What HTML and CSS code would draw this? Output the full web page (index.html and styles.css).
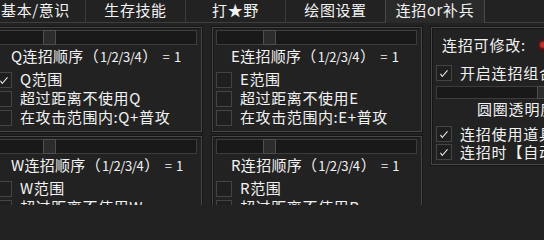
FILE: index.html
```html
<!DOCTYPE html>
<html lang="zh-CN">
<head>
<meta charset="utf-8">
<title>连招or补兵</title>
<link rel="stylesheet" href="styles.css">
</head>
<body>
<div class="app">
  <nav class="tabs">
    <div class="tab">基本/意识</div>
    <div class="tab">生存技能</div>
    <div class="tab">打★野</div>
    <div class="tab">绘图设置</div>
    <div class="tab active">连招or补兵</div>
    <div class="tab"></div>
  </nav>
  <main class="content">
    <div class="grid">
      <section class="panel">
        <div class="slider"><span class="thumb"></span></div>
        <div class="title">Q连招顺序（<span class="num">1/2/3/4</span>）<span class="num eq">= 1</span></div>
        <div class="rows">
          <label class="row"><span class="box checked"><svg viewBox="0 0 16 16"><polyline points="4,9 6,12 12,5"/></svg></span><span class="txt">Q范围</span></label>
          <label class="row"><span class="box"></span><span class="txt">超过距离不使用Q</span></label>
          <label class="row"><span class="box"></span><span class="txt">在攻击范围内:Q+普攻</span></label>
        </div>
      </section>
      <section class="panel">
        <div class="slider"><span class="thumb"></span></div>
        <div class="title">E连招顺序（<span class="num">1/2/3/4</span>）<span class="num eq">= 1</span></div>
        <div class="rows">
          <label class="row"><span class="box"></span><span class="txt">E范围</span></label>
          <label class="row"><span class="box"></span><span class="txt">超过距离不使用E</span></label>
          <label class="row"><span class="box"></span><span class="txt">在攻击范围内:E+普攻</span></label>
        </div>
      </section>
      <section class="panel">
        <div class="slider"><span class="thumb"></span></div>
        <div class="title">W连招顺序（<span class="num">1/2/3/4</span>）<span class="num eq">= 1</span></div>
        <div class="rows">
          <label class="row"><span class="box"></span><span class="txt">W范围</span></label>
          <label class="row"><span class="box"></span><span class="txt">超过距离不使用W</span></label>
          <label class="row"><span class="box"></span><span class="txt">在攻击范围内:W+普攻</span></label>
        </div>
      </section>
      <section class="panel">
        <div class="slider"><span class="thumb"></span></div>
        <div class="title">R连招顺序（<span class="num">1/2/3/4</span>）<span class="num eq">= 1</span></div>
        <div class="rows">
          <label class="row"><span class="box"></span><span class="txt">R范围</span></label>
          <label class="row"><span class="box"></span><span class="txt">超过距离不使用R</span></label>
          <label class="row"><span class="box"></span><span class="txt">在攻击范围内:R+普攻</span></label>
        </div>
      </section>
    </div>
    <section class="side">
      <div class="side-head">连招可修改:<span class="lamp"></span></div>
      <label class="srow first"><span class="box checked"><svg viewBox="0 0 16 16"><polyline points="4,9 6,12 12,5"/></svg></span><span class="txt">开启连招组合</span></label>
      <div class="bar"><span class="bar-end"></span></div>
      <div class="caption">圆圈透明度</div>
      <label class="srow gap"><span class="box checked"><svg viewBox="0 0 16 16"><polyline points="4,9 6,12 12,5"/></svg></span><span class="txt">连招使用道具</span></label>
      <label class="srow"><span class="box checked"><svg viewBox="0 0 16 16"><polyline points="4,9 6,12 12,5"/></svg></span><span class="txt">连招时【自动】</span></label>
    </section>
  </main>
</div>
</body>
</html>
```

FILE: styles.css
```css
html, body {
  margin: 0;
  padding: 0;
  background: #222222;
  overflow: hidden;
}
body {
  width: 544px;
  height: 205px;
  font-family: "Noto Sans CJK SC", "Noto Sans", sans-serif;
  font-size: 15px;
  color: #f2f2f2;
}
.app {
  margin-left: -14px;
  width: 620px;
}
.tabs {
  display: flex;
  height: 22px;
  border-bottom: 1px solid #3e3e3e;
}
.tab {
  flex: 0 0 100px;
  box-sizing: border-box;
  border-right: 1px solid #3a3a3a;
  text-align: center;
  line-height: 19px;
  letter-spacing: 0.6px;
  white-space: nowrap;
}
.tab.active {
  background: #2a2a2a;
  border-left: 1px solid #4a4a4a;
  border-right: 1px solid #4a4a4a;
  margin-left: -1px;
  margin-bottom: -1px;
  height: 23px;
}
.content {
  display: flex;
  align-items: flex-start;
  padding: 4px 0 0 6px;
  gap: 9px;
}
.grid {
  display: grid;
  grid-template-columns: 210px 210px;
  column-gap: 10px;
  row-gap: 4px;
}
.panel {
  box-sizing: border-box;
  height: 105px;
  border: 1px solid #474747;
  box-shadow: 0 0 0 1px #161616, inset 1px 1px 0 #161616;
  padding: 2px 4px 2px 3px;
}
.slider {
  height: 15px;
  box-sizing: border-box;
  border: 1px solid #3c3c3c;
  background: #191919;
  position: relative;
}
.thumb {
  position: absolute;
  left: 46px;
  top: -1px;
  width: 13px;
  height: 15px;
  box-sizing: border-box;
  border: 1px solid #4e4e4e;
  background: #2c2c2c;
}
.title {
  height: 21px;
  line-height: 21px;
  padding-left: 15px;
  white-space: nowrap;
  letter-spacing: 0.3px;
}
.num {
  font-size: 13px;
  letter-spacing: -0.4px;
  padding: 0 1px;
}
.num.eq {
  padding-left: 5px;
  word-spacing: 2px;
}
.rows {
  margin-top: 6px;
  display: flex;
  flex-direction: column;
}
.row {
  display: flex;
  align-items: flex-start;
  height: 19px;
  white-space: nowrap;
  letter-spacing: 0.6px;
}
.txt {
  line-height: 13px;
  display: block;
}
.row .box {
  margin-right: 8px;
}
.box {
  flex: 0 0 16px;
  width: 16px;
  height: 16px;
  box-sizing: border-box;
  border: 1px solid #444444;
  background: #1f1f1f;
  display: inline-block;
}
.box svg {
  display: block;
  width: 14px;
  height: 14px;
  margin: 0;
}
.box polyline {
  fill: none;
  stroke: #f2f2f2;
  stroke-width: 1.2;
}
.side {
  box-sizing: border-box;
  width: 140px;
  height: 138px;
  border: 1px solid #474747;
  box-shadow: 0 0 0 1px #161616, inset 1px 1px 0 #161616;
  padding: 4px 0 4px 4px;
}
.side-head {
  height: 26px;
  line-height: 26px;
  padding-left: 6px;
  display: flex;
  align-items: center;
  letter-spacing: 0.8px;
  white-space: nowrap;
}
.lamp {
  margin-left: 12px;
  width: 10px;
  height: 13px;
  border-radius: 5px;
  background: radial-gradient(circle at 50% 45%, #c23030 0 2px, #5a1515 4px, #3a1414 6px);
}
.srow {
  display: flex;
  align-items: flex-start;
  height: 16px;
  white-space: nowrap;
  letter-spacing: 0.8px;
}
.srow .txt {
  line-height: 15px;
}
.srow .box {
  margin-right: 8px;
}
.srow.first {
  margin-top: 7px;
}
.srow.gap {
  margin-top: 7px;
}
.srow + .srow {
  margin-top: 2px;
}
.bar {
  margin-top: 5px;
  height: 13px;
  width: 140px;
  box-sizing: border-box;
  border: 1px solid #3c3c3c;
  background: #191919;
  position: relative;
}
.bar-end {
  position: absolute;
  left: 100px;
  top: -1px;
  width: 13px;
  height: 13px;
  box-sizing: border-box;
  border: 1px solid #4e4e4e;
  background: #2c2c2c;
}
.caption {
  height: 20px;
  line-height: 20px;
  padding-left: 41px;
  white-space: nowrap;
  letter-spacing: 0.8px;
}
```
